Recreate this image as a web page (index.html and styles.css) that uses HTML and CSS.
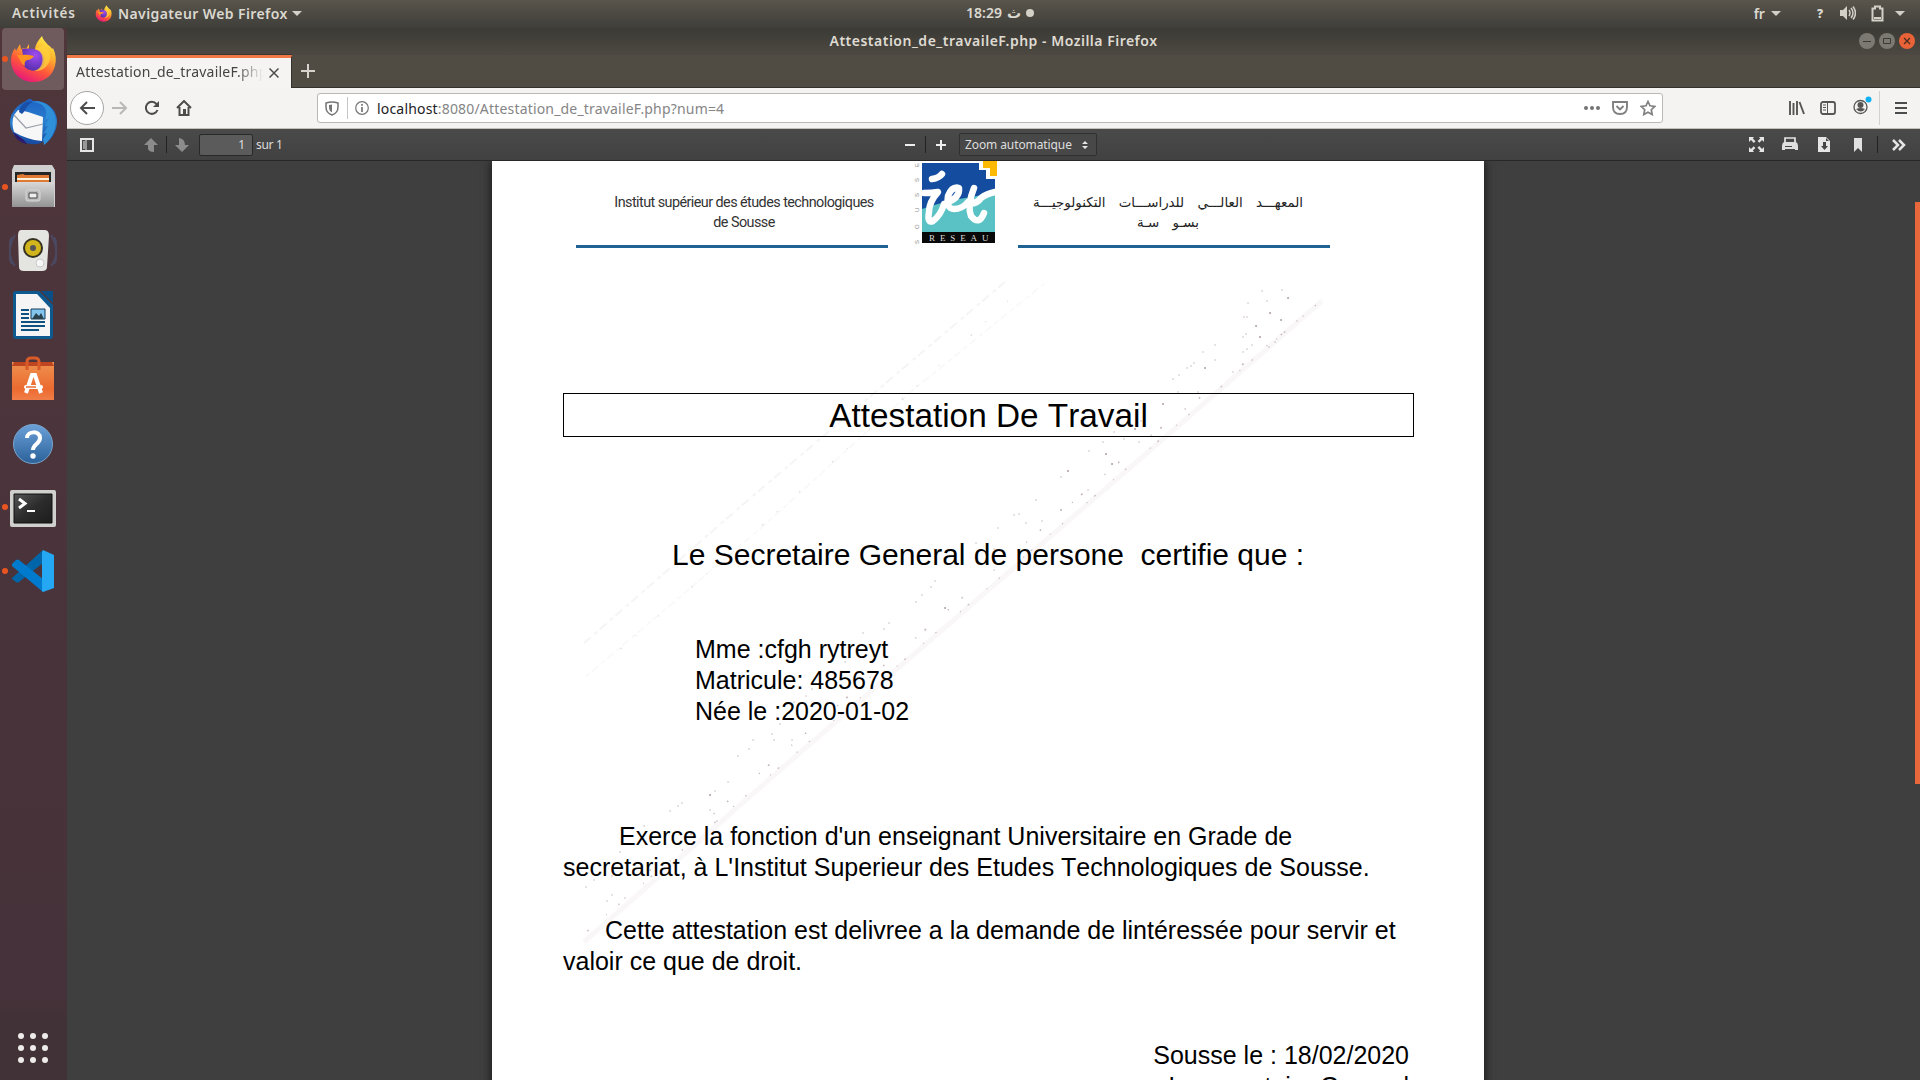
FILE: index.html
```html
<!DOCTYPE html>
<html lang="fr">
<head>
<meta charset="utf-8">
<title>Attestation_de_travaileF.php - Mozilla Firefox</title>
<link rel="stylesheet" href="styles.css">
</head>
<body>
<svg width="0" height="0" class="defs">
  <defs>
    <linearGradient id="fxBody" x1=".8" y1="0" x2=".3" y2="1"><stop offset="0" stop-color="#fff24a"/><stop offset=".35" stop-color="#ffb02c"/><stop offset=".65" stop-color="#ff5a38"/><stop offset="1" stop-color="#e6157c"/></linearGradient>
    <radialGradient id="fxGlobe" cx=".6" cy=".3" r=".7"><stop offset="0" stop-color="#a04cf0"/><stop offset="1" stop-color="#5a30b0"/></radialGradient>
    <linearGradient id="tb" x1="0" y1="0" x2="0" y2="1"><stop offset="0" stop-color="#1e62c4"/><stop offset=".5" stop-color="#2a80cf"/><stop offset="1" stop-color="#17469f"/></linearGradient>
    <linearGradient id="metal" x1="0" y1="0" x2="0" y2="1"><stop offset="0" stop-color="#d8d8d8"/><stop offset="1" stop-color="#939393"/></linearGradient>
    <linearGradient id="bag" x1="0" y1="0" x2="0" y2="1"><stop offset="0" stop-color="#ee9250"/><stop offset=".7" stop-color="#ec6a30"/><stop offset="1" stop-color="#f07e48"/></linearGradient>
    <linearGradient id="help" x1="0" y1="0" x2="0" y2="1"><stop offset="0" stop-color="#6ba0d8"/><stop offset="1" stop-color="#2b6299"/></linearGradient>
    <linearGradient id="term" x1="0" y1="0" x2="1" y2="1"><stop offset="0" stop-color="#555"/><stop offset=".5" stop-color="#2c2c2c"/><stop offset="1" stop-color="#1c1c1c"/></linearGradient>
    <symbol id="firefox" viewBox="0 0 48 48">
      <path d="M33 1c1 4 4 6 6 9 2 1 3 2 4 4l1-1c3 6 3.500 12 2 18C43.500 41 35 47 24.500 47 12 47 2 38 2 25c0-5 2-9 4-12l1 3 4-7 1 5c2-1 4-1 5 0l3-5 0 6c3-1 5-1 6 0C26 10 29 6 33 1z" fill="url(#fxBody)"/>
      <path d="M13 14c6-1 12-1 18 2 5 4 5 12 2 16-4 5-14 5-18-1-2-4-2-8-1-10z" fill="url(#fxGlobe)"/>
      <path d="M8 20c5 0 10-1 17 1-1 2-4 4-7 4-2 1-3 3-2 6-4-2-5-7-8-11z" fill="#ff9420"/>
      <path d="M26 14c5 1 9 7 7 14-1 4-4 7-8 8 9 1 15-6 16-12 1-7-3-9-5-14z" fill="#ffd23c" opacity=".75"/>
    </symbol>
  </defs>
</svg>

<header class="topbar">
  <span class="activities">Activités</span>
  <svg class="app-icon" width="17" height="17"><use href="#firefox"/></svg>
  <span class="app-name">Navigateur Web Firefox</span>
  <i class="caret"></i>
  <div class="clock"><span>18:29</span><span class="day">ث</span><i class="dot"></i></div>
  <div class="status">
    <span class="lang">fr</span><i class="caret"></i>
    <b class="ask">?</b>
    <svg class="vol" width="16" height="16" viewBox="0 0 16 16" fill="none" stroke="#d3d0c8" stroke-width="1.500"><path d="M0 5h3l4-4v14l-4-4H0z" fill="#d3d0c8" stroke="none"/><path d="M9 5q2 3 0 6M11 3q4 5 0 10M13 1.500q5 6.500 0 13"/></svg>
    <svg class="bat" width="13" height="17" viewBox="0 0 13 17" fill="none" stroke="#d3d0c8" stroke-width="2"><path d="M1.500 3.500h2.500V1.500h5v2h2.500v12h-10zM3 13h7"/></svg>
    <i class="caret"></i>
  </div>
</header>

<div class="desktop">
  <nav class="dock">
    <div class="launcher active running"><svg width="48" height="48" viewBox="0 0 48 48"><use href="#firefox"/></svg></div>
    <div class="launcher"><svg width="48" height="48" viewBox="0 0 48 48"><path d="M17 2c3-3 6-2 7 0 13-1 24 8 24 20 0 11-6 19-13 24l1-4-7 3c-12 1-22-3-26-13-6-12 2-25 14-30z" fill="url(#tb)"/><path d="M5 16l4-5 10 2 15 5-1 24C22 41 14 38 5 33c-2-6-2-12 0-17z" fill="#f7f7f7"/><path d="M5 16l12 13 17-4" fill="none" stroke="#9ba0aa" stroke-width="1.200"/><path d="M22 3c12 0 18 7 14 18l4-2-4 8 3 0-5 8 4-1-4 6 1 6C49 36 52 12 35 4 31 2 26 2 22 3z" fill="#2f8fd8"/><path d="M10 13C11 6 17 1 24 3c-6 2-7 8-11 12z" fill="#1a4fa8"/><path d="M4 33l11 8 3 4C11 44 6 39 4 33z" fill="#2b1c70"/></svg></div>
    <div class="launcher running"><svg width="48" height="48" viewBox="0 0 48 48"><path d="M5 2h38l3 5v37H3V7z" fill="#cfcfcf"/><path d="M6 9h36v12H6z" fill="#252525"/><path d="M8 12l6-1 2 1h24v8H8z" fill="#e07a32"/><path d="M8 15h32v2H8z" fill="#fff1d8"/><path d="M3 19h42v25H3z" fill="url(#metal)"/><rect x="17" y="27" width="14" height="11" rx="2" fill="#bbb" stroke="#d8d8d8"/><path d="M20 30h8v5h-8z" fill="#eee" stroke="#444"/></svg></div>
    <div class="launcher"><svg width="48" height="48" viewBox="0 0 48 48"><path d="M6 8C-1 20-1 30 6 39M3 10c-5 10-5 18 0 27M42 8c7 12 7 22 0 31M45 10c5 10 5 18 0 27" fill="none" stroke="#4a5f8d" stroke-width="2" opacity=".45"/><path d="M12 3h24q4 0 4 6l-2 31q0 4-5 4H15q-5 0-5-4L9 9q0-6 3-6z" fill="#e4e4e1"/><circle cx="24" cy="21" r="10" fill="#34321f"/><circle cx="24" cy="21" r="8" fill="#d2b41c"/><circle cx="24" cy="21" r="3" fill="#555"/><circle cx="31" cy="36" r="4" fill="#f7f7f7" stroke="#c9c9c9"/></svg></div>
    <div class="launcher"><svg width="48" height="48" viewBox="0 0 48 48"><path d="M7 0h23l14 14v31q0 3-3 3H7q-3 0-3-3V3q0-3 3-3z" fill="#0e5a90"/><path d="M32 0h12v12z" fill="#0b4f85"/><path d="M7 3h21l13 14v28H7z" fill="#f5f5f5"/><path d="M12 19h8M12 23h8M12 27h8M12 31h24M12 35h24M12 39h18" stroke="#0e5280" stroke-width="2"/><path d="M22 18h14v10H22z" fill="#83c5ed" stroke="#123c5f"/><path d="M23 28l4-6 3 3 2-3 3 6z" fill="#29424d"/></svg></div>
    <div class="launcher"><svg width="48" height="48" viewBox="0 0 48 48"><path d="M3 7h42v38H3z" fill="url(#bag)"/><path d="M5 7h38l2 4H3z" fill="#bf4420"/><path d="M18 15V7q0-4 4-4h4q4 0 4 4v8" fill="none" stroke="#d85b29" stroke-width="3"/><path d="M17 38l6-18h3l6 18" fill="none" stroke="#fff" stroke-width="4"/><path d="M17 32h15" stroke="#fff" stroke-width="4" stroke-linecap="round"/><path d="M17 32h10" stroke="#e76d35" stroke-width="1.500"/></svg></div>
    <div class="launcher"><svg width="48" height="48" viewBox="0 0 48 48"><circle cx="24" cy="25" r="19.500" fill="url(#help)" stroke="#79a5cd"/><path d="M18 19c0-7 13-8 13 0 0 6-7 6-7 12" fill="none" stroke="#fff" stroke-width="4"/><circle cx="24" cy="37" r="2.700" fill="#fff"/></svg></div>
    <div class="launcher running"><svg width="48" height="48" viewBox="0 0 48 48"><rect x="1" y="7" width="46" height="37" rx="2" fill="#d0d0ce"/><path d="M5 11h38v29H5z" fill="url(#term)" stroke="#111"/><path d="M10 16l6 4.500-6 4.500" fill="none" stroke="#fff" stroke-width="3"/><path d="M18 28h8" stroke="#fff" stroke-width="2"/></svg></div>
    <div class="launcher running"><svg width="48" height="48" viewBox="0 0 48 48"><path d="M3 31L34 3v13L10 35q-1 1-3 0l-4-3z" fill="#0065a9"/><path d="M3 17l4-4q2-1 3 0l24 19v13L3 19z" fill="#007acc"/><path d="M34 3l11 5v33l-11 4q-1 0-1-2V5z" fill="#25a8f3"/></svg></div>
    <svg class="apps" width="30" height="30" viewBox="0 0 30 30" fill="#eeecea"><circle cx="3" cy="3" r="3"/><circle cx="15" cy="3" r="3"/><circle cx="27" cy="3" r="3"/><circle cx="3" cy="15" r="3"/><circle cx="15" cy="15" r="3"/><circle cx="27" cy="15" r="3"/><circle cx="3" cy="27" r="3"/><circle cx="15" cy="27" r="3"/><circle cx="27" cy="27" r="3"/></svg>
  </nav>

  <main class="window">
    <div class="titlebar">
      <span class="title">Attestation_de_travaileF.php - Mozilla Firefox</span>
      <div class="controls">
        <svg width="16" height="16" viewBox="0 0 16 16"><circle cx="8" cy="8" r="8" fill="#7b7972"/><path d="M4 8.500h8" stroke="#3b3a35"/></svg>
        <svg width="16" height="16" viewBox="0 0 16 16"><circle cx="8" cy="8" r="8" fill="#7b7972"/><path d="M4.500 5.500h7v5h-7z" fill="none" stroke="#3b3a35"/></svg>
        <svg width="16" height="16" viewBox="0 0 16 16"><circle cx="8" cy="8" r="8" fill="#ea6338"/><path d="M5 5l6 6M11 5l-6 6" stroke="#4c2b20" stroke-width="1.300"/></svg>
      </div>
    </div>
    <div class="tabs">
      <div class="tab"><span>Attestation_de_travaileF.php</span><svg width="10" height="10" viewBox="0 0 10 10"><path d="M.5.5l9 9M9.500.5l-9 9" stroke="#4c4c4c" stroke-width="1.500"/></svg></div>
      <svg class="plus" width="14" height="14" viewBox="0 0 14 14"><path d="M7 0v14M0 7h14" stroke="#d6d3cc" stroke-width="2"/></svg>
    </div>
    <div class="nav">
      <div class="back"><svg width="16" height="14" viewBox="0 0 16 14" fill="none" stroke="#4c4c4c" stroke-width="2"><path d="M16 7H2M8 1L2 7l6 6"/></svg></div>
      <svg class="fwd" width="16" height="14" viewBox="0 0 16 14" fill="none" stroke="#b9b8b6" stroke-width="2"><path d="M0 7h14M8 1l6 6-6 6"/></svg>
      <svg class="reload" width="16" height="16" viewBox="0 0 16 16"><path d="M12.500 4A6 6 0 1 0 13.500 10" fill="none" stroke="#4c4c4c" stroke-width="2"/><path d="M15 1v6H9z" fill="#4c4c4c"/></svg>
      <svg class="home" width="16" height="16" viewBox="0 0 16 16"><path d="M1 8l7-7 7 7M3.500 7v8h9V7" fill="none" stroke="#4c4c4c" stroke-width="2"/><path d="M7 9h3v6H7z" fill="#4c4c4c"/></svg>
      <div class="url">
        <svg class="shield" width="14" height="15" viewBox="0 0 14 15"><path d="M1 2q6-2 12 0v4q0 6-6 8Q1 12 1 6z" fill="none" stroke="#747474" stroke-width="1.500"/><path d="M7 3.500v8Q4 10 4 6V4z" fill="#747474"/></svg>
        <i class="bar"></i>
        <svg class="info" width="14" height="14" viewBox="0 0 14 14"><circle cx="7" cy="7" r="6.300" fill="none" stroke="#747474" stroke-width="1.200"/><path d="M7 6v5M7 3v1.700" stroke="#747474" stroke-width="1.700"/></svg>
        <span class="address"><b>localhost</b>:8080/Attestation_de_travaileF.php?num=4</span>
        <svg class="more" width="16" height="4" viewBox="0 0 16 4" fill="#747474"><circle cx="2" cy="2" r="2"/><circle cx="8" cy="2" r="2"/><circle cx="14" cy="2" r="2"/></svg>
        <svg class="pocket" width="16" height="14" viewBox="0 0 16 14" fill="none" stroke="#808080" stroke-width="1.900"><path d="M1 1h14v5q0 7-7 7T1 6zM4.500 5L8 8.500 11.500 5"/></svg>
        <svg width="16" height="16" viewBox="0 0 16 16"><path d="M8 1.500l2 4.300 4.800.6-3.500 3.300.9 4.800L8 12.200l-4.200 2.300.9-4.800L1.200 6.400l4.800-.6z" fill="none" stroke="#808080" stroke-width="1.700"/></svg>
      </div>
      <svg class="lib" width="16" height="14" viewBox="0 0 16 14"><path d="M1 0v14M4.500 2v12M8 0v14M10.500 1l4.500 12" stroke="#555" stroke-width="1.900"/></svg>
      <svg class="side" width="16" height="14" viewBox="0 0 16 14"><rect x="1" y="1" width="14" height="12" rx="2" fill="none" stroke="#555" stroke-width="1.800"/><path d="M7.500 1v12M3 4h3M3 6.500h3M3 9h3" stroke="#555"/></svg>
      <svg class="account" width="19" height="19" viewBox="0 0 19 19"><circle cx="7.500" cy="11" r="6.500" fill="none" stroke="#555" stroke-width="1.300"/><circle cx="7.500" cy="9" r="3" fill="#555"/><path d="M3 13q4.500-2 9 0-4 5-9 0z" fill="#555"/><circle cx="15.500" cy="3.500" r="3" fill="#10b2f5"/></svg>
      <div class="burger"><svg width="12" height="12" viewBox="0 0 12 12"><path d="M0 1h12M0 6h12M0 11h12" stroke="#4c4c4c" stroke-width="2"/></svg></div>
    </div>
    <div class="pdfbar">
      <svg class="sidebar-icon" width="14" height="14" viewBox="0 0 14 14"><path d="M1 1h12v12H1z" fill="none" stroke="#e5e5e5" stroke-width="2"/><path d="M3 3h2v8H3z" fill="#999"/><path d="M6 2v10" stroke="#e5e5e5"/></svg>
      <svg class="up" width="14" height="14" viewBox="0 0 14 14"><path d="M7 0l7 7h-4v7q-5 0-6-3V7H0z" fill="#8c8c8c"/></svg>
      <i class="sep"></i>
      <svg class="down" width="14" height="14" viewBox="0 0 14 14"><path d="M7 14l7-7h-4q0-6-6-7v7H0z" fill="#8c8c8c"/></svg>
      <span class="pageno">1</span><span class="total">sur 1</span>
      <svg class="minus" width="10" height="10" viewBox="0 0 10 10"><path d="M0 5h10" stroke="#eee" stroke-width="2"/></svg>
      <i class="sep"></i>
      <svg class="zin" width="10" height="10" viewBox="0 0 10 10"><path d="M0 5h10M5 0v10" stroke="#eee" stroke-width="2"/></svg>
      <div class="select"><span>Zoom automatique</span><svg width="6" height="8" viewBox="0 0 6 8"><path d="M3 0l3 3H0zM3 8l3-3H0z" fill="#e5e5e5"/></svg></div>
      <svg class="full" width="15" height="15" viewBox="0 0 15 15" fill="#e5e5e5"><path d="M0 0h5L3.800 1.500l2.700 2.700-1.700 1.700L2 3 0 5zM15 0v5L13 3l-2.700 2.800-1.700-1.700 2.700-2.600L10 0zM0 15v-5l2 2 2.700-2.800 1.700 1.700-2.600 2.700L5 15zM15 15h-5l1.200-1.500-2.700-2.700 1.700-1.700L13 12l2-2z"/></svg>
      <svg class="print" width="16" height="15" viewBox="0 0 16 15"><path d="M3 6V1h10v5" fill="none" stroke="#e5e5e5" stroke-width="1.700"/><path d="M2 5h12q2 1 2 4v4H0V9q0-3 2-4z" fill="#ddd"/><path d="M3 9h7v1H3zM3 12h10v1H3z" fill="#444"/></svg>
      <svg class="dl" width="12" height="15" viewBox="0 0 12 15"><path d="M0 0h8l4 4v11H0z" fill="#e5e5e5"/><path d="M5 5h3v4h2l-3.500 4L3 9h2zM8 1v3h3" fill="#444"/></svg>
      <svg class="mark" width="8" height="14" viewBox="0 0 8 14"><path d="M0 0h8v14L4 10l-4 4z" fill="#e0e0e0"/></svg>
      <i class="sep"></i>
      <svg class="tools" width="14" height="12" viewBox="0 0 14 12"><path d="M1 1l5 5-5 5M7 1l5 5-5 5" fill="none" stroke="#e5e5e5" stroke-width="2.500"/></svg>
    </div>
    <div class="viewer">
      <article class="page">
        <svg class="scan" width="992" height="918" viewBox="492 162 992 918" fill="none">
          <path d="M1322 302L1155 447 795 758 584 943" stroke="#faf7f8" stroke-width="5"/>
          <path d="M1005 283L900 372 740 508 583 645" stroke="#f5f5f5" stroke-width="2" stroke-dasharray="9 3 4 5"/>
          <path d="M1045 284L913 391 760 530 583 680" stroke="#f8f8f8" stroke-width="1.500" stroke-dasharray="5 4 8 3"/>
          <path d="M1316 306L1155 445 795 755 584 935" stroke="#cdbfc3" stroke-width="1.300" stroke-dasharray="1.500 15 1 23 2 9 1 31"/>
          <path d="M1282 335L1140 445 770 765 640 880" stroke="#c3b4b8" stroke-width="1.500" stroke-dasharray="1.500 17 1 29 2 11 1 41"/>
          <path d="M1008 302L905 398 740 546 600 668" stroke="#ddd" stroke-width="1.200" stroke-dasharray="1 29 1 18 2 43"/>
          <path class="specks" d="M1262 292h.1M1282 291h.1M1288 299h.1M1248 304h.1M1267 302h.1M1270 314h.1M1244 318h.1M1247 318h.1M1256 327h.1M1281 321h.1M1297 322h.1M1243 338h.1M1246 335h.1M1260 338h.1M1243 353h.1M1247 350h.1M1252 346h.1M1269 348h.1M1275 343h.1M1215 346h.1M1203 353h.1M1194 364h.1M1187 369h.1M1191 367h.1M1205 369h.1M1215 361h.1M1173 380h.1M1179 376h.1M1178 393h.1M1198 393h.1M1163 405h.1M1135 430h.1M1141 422h.1M1114 433h.1M1124 440h.1M1139 443h.1M1103 443h.1M1089 452h.1M1106 455h.1M1112 465h.1M1068 472h.1M1061 478h.1M1088 491h.1M1036 501h.1M1019 515h.1M1014 516h.1M998 529h.1M1026 524h.1M1042 522h.1M976 544h.1M994 550h.1M935 582h.1M931 588h.1M922 596h.1M916 603h.1M945 609h.1M889 624h.1M884 630h.1M863 634h.1M845 663h.1M812 690h.1M806 697h.1M794 703h.1M780 725h.1M772 735h.1M753 741h.1M774 741h.1M792 741h.1M749 750h.1M738 757h.1M728 783h.1M715 792h.1M710 796h.1M682 804h.1M678 807h.1M670 812h.1M710 811h.1M717 822h.1M644 827h.1M632 830h.1M620 853h.1M612 877h.1M594 881h.1M586 888h.1M612 896h.1M607 902h.1M625 899h.1"/>
          <path class="specks dark" d="M1270 314h.1M1256 327h.1M1288 299h.1M1281 321h.1M1260 338h.1M1205 369h.1M1163 405h.1M1135 430h.1M1112 465h.1M1106 455h.1M1061 511h.1M1068 472h.1M945 609h.1M710 796h.1"/>
        </svg>
        <div class="letterhead">
          <div class="institute fr">Institut supérieur des études technologiques<br>de Sousse</div>
          <svg class="logo" width="90" height="84" viewBox="0 0 90 84">
            <path d="M12 2h73v51H12z" fill="#144c9f"/><path d="M12 48q35-12 73-15v40H12z" fill="#5ac2c5"/>
            <path d="M12 71h73v11H12z" fill="#090909"/>
            <path d="M69 0v9h7v9h12V0z" fill="#fff"/><path d="M73 0v7h7v8h7V0z" fill="#fcba02"/>
            <path d="M22 18q7-1 10-5M14 32q8 0 14-1-9 10-9 20-2 12 4 9 8-6 11-17M36 42q14-5 13-15-7-2-11 8-2 13 6 13 8 0 14-7M64 27q-7 17-3 28 8 10 13-3M57 42q9 2 14-5 5-4 14-6" fill="none" stroke="#fff" stroke-width="6.500" stroke-linecap="round" stroke-linejoin="round"/>
            <text x="19" y="80" class="reseau">RESEAU</text>
            <g class="sousse"><text transform="translate(9 83) rotate(-90)">S</text><text transform="translate(9 68) rotate(-90)">O</text><text transform="translate(9 51) rotate(-90)">U</text><text transform="translate(9 36) rotate(-90)">S</text><text transform="translate(9 21) rotate(-90)">S</text><text transform="translate(9 6) rotate(-90)">E</text></g>
          </svg>
          <div class="institute ar" dir="rtl" lang="ar">المعهـــد العالـــي للدراســـات التكنولوجيـــة<br>بسـو سـة</div>
        </div>
        <h1>Attestation De Travail</h1>
        <h2>Le Secretaire General de persone&nbsp; certifie que :</h2>
        <div class="person">Mme :cfgh rytreyt<br>Matricule: 485678<br>Née le :2020-01-02</div>
        <p class="role">Exerce la fonction d'un enseignant Universitaire en Grade de<br>secretariat, à L'Institut Superieur des Etudes Technologiques de Sousse.</p>
        <p class="purpose">Cette attestation est delivree a la demande de lintéressée pour servir et<br>valoir ce que de droit.</p>
        <div class="sign">Sousse le : 18/02/2020<br>Le secretaire General</div>
      </article>
      <i class="thumb"></i>
    </div>
  </main>
</div>
</body>
</html>
```
FILE: styles.css
```css
* { box-sizing: border-box; }
body { margin: 0; width: 1920px; height: 1080px; overflow: hidden; display: flex; flex-direction: column; font-family: "Noto Sans", "DejaVu Sans", sans-serif; font-size: 14px; }
svg { display: block; flex: none; }
.defs { position: absolute; }
span { white-space: nowrap; }
.caret { border: 5px solid transparent; border-top: 5px solid #d3d0c8; border-bottom: 0; }

.topbar { position: relative; height: 28px; flex: none; display: flex; align-items: center; padding: 0 17px 2px 12px; background: linear-gradient(#59554c, #3f3e39); color: #dbd8d0; font-weight: 600; }
.activities { width: 64px; font-size: 13.5px; letter-spacing: 0.8px; }
.app-icon { margin: 0 6px 0 19px; }
.app-name { width: 168px; margin-right: 6px; letter-spacing: 0.4px; }
.clock { display: flex; align-items: center; position: absolute; left: 966px; top: 3px; gap: 5px; }
.clock .day { font-family: "DejaVu Sans", sans-serif; }
.dot { width: 8px; height: 8px; border-radius: 50%; background: #d3d0c8; }
.status { margin-left: auto; display: flex; align-items: center; }
.lang { margin-right: 6px; }
.ask { margin-left: 36px; font-size: 12px; }
.vol { margin: 0 15px 0 17px; }
.bat { margin-right: 11px; }
.status .caret:last-child { margin-right: -2px; }

.desktop { flex: 1; display: flex; min-height: 0; }
.dock { width: 67px; display: flex; flex-direction: column; align-items: center; padding-bottom: 17px; margin-top: -1px; background: linear-gradient(#4e363b, #4b343b 40%, #46323a 92%, #403236 95%); }
.launcher { position: relative; width: 62px; height: 62px; margin: 1px 3px 1px 2px; border-radius: 4px; display: grid; place-items: center; flex: none; align-self: flex-start; }
.launcher.active { background: #6f5a5e; }
.running::before { content: ""; position: absolute; left: 0; top: 28px; width: 6px; height: 6px; border-radius: 50%; background: #e95420; }
.apps { margin: auto 2px 0 0; }

.window { flex: 1; display: flex; flex-direction: column; min-width: 0; }
.titlebar { height: 27px; display: flex; align-items: center; position: relative; justify-content: center; background: linear-gradient(#3b3a35, #4d4942); color: #dfdbd2; font-weight: 600; padding: 0 0 2px; flex: none; }
.title { letter-spacing: 0.5px; }
.controls { position: absolute; right: 5px; top: 5px; display: flex; gap: 4px; }
.tabs { height: 33px; flex: none; display: flex; align-items: center; background: #504c44; border-bottom: 1px solid #33312c; }
.tab { width: 225px; height: 33px; align-self: flex-start; background: #f5f4f2; border-top: 3px solid #f07746; border-right: 1px solid #33312c; box-shadow: 0 -1px #383631; display: flex; align-items: center; justify-content: space-between; padding: 0 12px 0 9px; color: #444; position: relative; }
.tab span { width: 187px; margin-top: -3px; letter-spacing: 0.2px; overflow: hidden; -webkit-mask-image: linear-gradient(90deg, #000 160px, transparent 187px); mask-image: linear-gradient(90deg, #000 160px, transparent 187px); }
.plus { margin-left: 9px; }
.nav { height: 41px; flex: none; background: #f4f3f1; border-bottom: 1px solid #c4c1bd; display: flex; align-items: center; padding-left: 3px; }
.back { width: 34px; height: 34px; border: 1px solid #a7a6a4; border-radius: 50%; background: #fff; display: grid; place-items: center; }
.fwd { margin-left: 8px; }
.reload { margin-left: 16px; }
.home { margin-left: 16px; }
.url { width: 1346px; height: 30px; margin-left: 125px; border: 1px solid #bbb8b4; border-radius: 3px; background: #fff; display: flex; align-items: center; padding: 0 6px 0 7px; }
.bar { width: 1px; height: 22px; background: #c6c6c6; margin: 0 7px 0 8px; }
.address { margin-left: 8px; color: #858585; letter-spacing: 0.18px; }
.address b { font-weight: 400; color: #222; }
.more { margin-left: auto; }
.pocket { margin: 0 12px; }
.lib { margin-left: 126px; }
.side { margin-left: 15px; }
.account { margin: -6px 0 0 17px; }
.burger { margin-left: 7px; border-left: 1px solid #d2d0cd; height: 34px; padding-left: 15px; display: flex; align-items: center; }

.pdfbar { height: 32px; flex: none; display: flex; align-items: center; padding-left: 13px; background: linear-gradient(#4a4a4a, #414141); border-bottom: 1px solid #282828; color: #ddd; font-size: 12px; }
.sep { width: 1px; height: 17px; background: #222; }
.up { margin: 0 8px 0 50px; }
.down { margin: 0 10px 0 8px; }
.pageno { width: 54px; height: 22px; border: 1px solid #292929; border-radius: 2px; background: #5b5b5b; text-align: right; padding-right: 7px; line-height: 20px; }
.total { margin-left: 3px; width: 27px; letter-spacing: -0.3px; }
.minus { margin: 0 10px 0 622px; }
.zin { margin: 0 13px 0 10px; }
.select { width: 138px; height: 23px; border: 1px solid #303030; border-radius: 2px; background: #484848; display: flex; align-items: center; justify-content: space-between; padding: 0 8px 0 5px; }
.select span { letter-spacing: -0.1px; }
.full { margin-left: 652px; }
.print { margin: 0 20px 0 18px; }
.mark { margin: 0 15px 0 24px; }
.tools { margin-left: 14px; }

.viewer { flex: 1; min-height: 0; background: #3f3f3f; position: relative; overflow: hidden; padding-left: 425px; }
.thumb { position: absolute; right: 0; top: 41px; width: 5px; height: 582px; background: #e8683c; }
.page { width: 992px; height: 1300px; background: #fff; position: relative; box-shadow: 0 0 9px #111; color: #000; font-family: "Liberation Sans", Arial, sans-serif; font-size: 25px; line-height: 31px; font-kerning: none; padding: 0 70px; }
.page > * { position: relative; }
.page > .scan { position: absolute; left: 0; top: 0; }
.specks { stroke: #c9bcc0; stroke-width: 1.5; stroke-linecap: round; }
.specks.dark { stroke: #907c84; }
.letterhead { display: flex; margin: 0 15px 0 14px; height: 87px; }
.institute { width: 312px; height: 87px; border-bottom: 3px solid #216295; text-align: center; white-space: nowrap; padding-top: 32px; color: #333; line-height: 20px; flex: none; }
.institute.fr { font-family: Roboto, sans-serif; font-size: 14.4px; letter-spacing: -0.56px; padding-left: 24px; }
.institute.ar { font-family: "DejaVu Sans", sans-serif; font-size: 13.4px; word-spacing: 9px; padding-right: 12px; color: #222; }
.logo { margin: 0 18px 0 22px; }
.reseau { font: 9px "Liberation Serif", serif; letter-spacing: 4.9px; fill: #ddd; }
.sousse { font: 6px "Liberation Sans", sans-serif; fill: #888; }
h1 { height: 44px; margin: 145px 0 0 1px; border: 1.5px solid #000; text-align: center; font-weight: 400; font-size: 33.33px; line-height: 43px; }
h2 { margin: 99px 0 0 110px; font-weight: 400; font-size: 30px; line-height: 38px; white-space: pre; }
.person { margin: 60px 0 0 133px; }
p { margin: 94px 0 0 1px; white-space: nowrap; }
.role { text-indent: 56px; }
.purpose { margin-top: 32px; text-indent: 42px; }
.sign { margin-top: 63px; text-align: right; padding-right: 5px; }
```
